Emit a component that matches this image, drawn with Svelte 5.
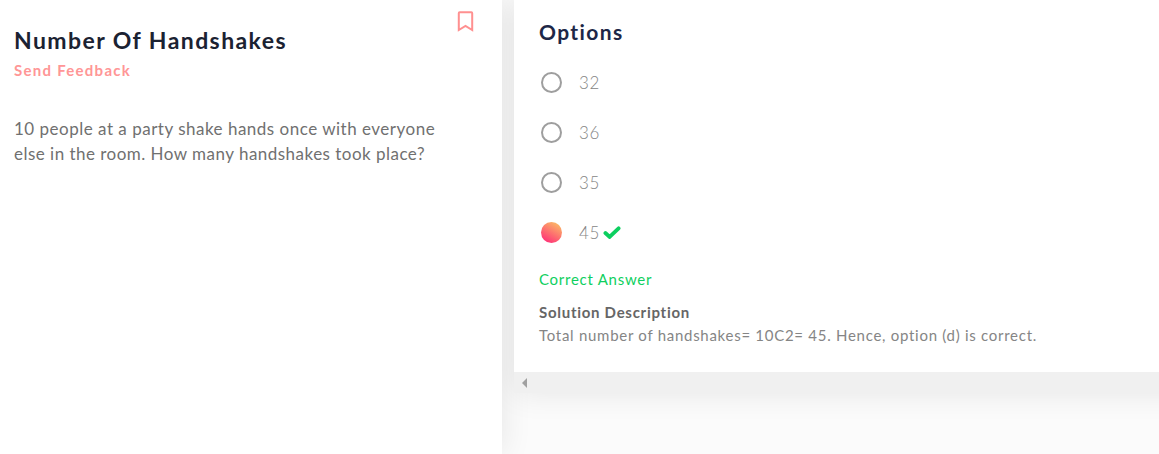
<script>
  const options = [
    { value: '32', correct: false },
    { value: '36', correct: false },
    { value: '35', correct: false },
    { value: '45', correct: true }
  ];
</script>

<main class="page">
  <section class="question">
    <header>
      <div>
        <h1>Number Of Handshakes</h1>
        <span class="feedback">Send Feedback</span>
      </div>
      <svg class="bookmark" width="17" height="21" viewBox="0 0 17 21">
        <path d="M1.8 2.2Q1.8 1.3 2.6 1.3H14.4Q15.2 1.3 15.2 2.2V19L8.5 15L1.8 19Z" />
      </svg>
    </header>
    <p class="prompt">
      10 people at a party shake hands once with everyone<br />
      <span class="second">else in the room. How many handshakes took place?</span>
    </p>
  </section>

  <section class="answers">
    <div class="card">
      <h2>Options</h2>
      <ul>
        {#each options as option}
          <li>
            <span class="radio" class:checked={option.correct}></span>
            <span class="value">{option.value}</span>
            {#if option.correct}
              <svg class="check" width="18" height="14" viewBox="0 0 18 14">
                <path d="M2.4 8L6.6 11.9L15.6 3.3" />
              </svg>
            {/if}
          </li>
        {/each}
      </ul>
      <p class="result">Correct Answer</p>
      <h3>Solution Description</h3>
      <p class="solution">Total number of handshakes= 10C2= 45. Hence, option (d) is correct.</p>
    </div>
    <div class="scrollbar">
      <svg width="5" height="10" viewBox="0 0 5 10"><path d="M5 0V10L0 5Z" fill="#a0a0a0" /></svg>
    </div>
  </section>
</main>

<style>
  :global(body) {
    margin: 0;
    overflow: hidden;
    background: #fbfbfb;
  }
  .page {
    display: flex;
    height: 454px;
    overflow: hidden;
    font-family: Lato, sans-serif;
    white-space: nowrap;
  }
  h1, h2, h3, p, ul {
    margin: 0;
    padding: 0;
  }
  .question {
    box-sizing: border-box;
    width: 502px;
    flex: none;
    padding: 11px 28px 0 14px;
    background: #fff;
    box-shadow: 0 0 30px rgba(0, 0, 0, 0.09);
  }
  header {
    display: flex;
    justify-content: space-between;
  }
  h1 {
    padding-top: 14px;
    font-size: 23px;
    line-height: 30px;
    font-weight: 700;
    color: #1b2232;
    letter-spacing: 1.42px;
  }
  .feedback {
    display: block;
    margin-top: 4px;
    font-size: 15px;
    line-height: 22px;
    font-weight: 700;
    color: #ff9696;
    letter-spacing: 1.27px;
  }
  .bookmark path {
    fill: none;
    stroke: #ff9090;
    stroke-width: 2;
  }
  .prompt {
    margin-top: 35px;
    font-size: 17px;
    line-height: 25px;
    letter-spacing: 0.5px;
    color: #707070;
  }
  .second {
    letter-spacing: 0.48px;
  }
  .answers {
    width: 700px;
    flex: none;
    height: 393px;
    margin-left: 12px;
    box-shadow: 0 0 30px rgba(0, 0, 0, 0.09);
    clip-path: inset(0 0 -50px -12px);
  }
  .card {
    box-sizing: border-box;
    height: 372px;
    padding: 17px 25px 0;
    background: #fff;
  }
  h2 {
    font-size: 21px;
    line-height: 30px;
    letter-spacing: 1.4px;
    color: #1d2747;
  }
  ul {
    padding-top: 10px;
    list-style: none;
  }
  li {
    display: flex;
    align-items: center;
    height: 50px;
  }
  .radio {
    box-sizing: border-box;
    width: 21px;
    height: 21px;
    margin: 0 17px 0 2px;
    border: 2px solid #9e9e9e;
    border-radius: 50%;
  }
  .radio.checked {
    border: 0;
    background: linear-gradient(30deg, #ff2d78 8%, #fbb966 90%);
  }
  .value {
    font-size: 17px;
    font-weight: 300;
    letter-spacing: 0.6px;
    color: #858585;
  }
  .check {
    margin-left: 3px;
  }
  .check path {
    fill: none;
    stroke: #0ccf5f;
    stroke-width: 3.8;
    stroke-linecap: round;
  }
  .result {
    margin-top: 11px;
    font-size: 15px;
    line-height: 22px;
    letter-spacing: 0.74px;
    color: #0fcf60;
  }
  h3 {
    margin-top: 11px;
    font-size: 15px;
    line-height: 22px;
    letter-spacing: 0.72px;
    color: #666;
  }
  .solution {
    margin-top: 1px;
    font-size: 15px;
    line-height: 22px;
    letter-spacing: 0.72px;
    color: #858585;
  }
  .scrollbar {
    display: flex;
    align-items: center;
    height: 21px;
    padding-left: 8px;
    background: #f0f0f0;
  }
</style>
